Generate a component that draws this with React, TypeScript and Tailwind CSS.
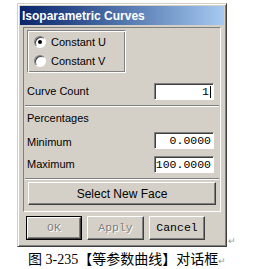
import React from "react";

const ui = { fontFamily: '"Liberation Sans", Arial, sans-serif' };
const mono = { fontFamily: '"Liberation Mono", "Courier New", monospace' };

function Radio({ checked, label }: { checked?: boolean; label: string }) {
  return (
    <div className="flex items-center h-[19px] pl-[6px] gap-[5px]">
      <span className="relative w-[12px] h-[12px] rounded-full bg-white border border-t-[#808080] border-l-[#808080] border-r-white border-b-white shadow-[inset_1px_1px_#404040]">
        {checked && <span className="absolute left-[3px] top-[3px] w-[4px] h-[4px] rounded-full bg-black" />}
      </span>
      <span className="text-[11px] text-black">{label}</span>
    </div>
  );
}

function Field({ value, cursor }: { value: string; cursor?: boolean }) {
  return (
    <div
      className="w-[60px] h-[17px] bg-white border border-t-[#808080] border-l-[#808080] border-r-white border-b-white shadow-[inset_1px_1px_#404040] flex items-center justify-end pr-[2px] text-[11.5px] text-black leading-none overflow-hidden"
      style={mono}
    >
      {value}
      {cursor && <span className="w-px h-[12px] bg-black ml-px" />}
    </div>
  );
}

function Sep() {
  return <div className="h-[2px] border-t border-t-[#808080] border-b border-b-white" />;
}

function Btn({ label, disabled, isDefault, w }: { label: string; disabled?: boolean; isDefault?: boolean; w: string }) {
  return (
    <div className={`${w} h-[24px] ${isDefault ? "border border-black" : ""}`}>
      <div
        className={`h-full flex items-center justify-center border border-t-white border-l-white border-r-[#404040] border-b-[#404040] shadow-[inset_-1px_-1px_#808080] text-[11.5px] ${
          disabled ? "text-[#808080] [text-shadow:1px_1px_#fff]" : "text-black"
        }`}
        style={mono}
      >
        {label}
      </div>
    </div>
  );
}

export default function App() {
  return (
    <div className="w-[266px] h-[269px] bg-white pl-[17px] pt-[3px]">
      <div className="flex items-end">
        <div
          className="w-[210px] h-[244px] bg-[#d4d0c8] border border-t-[#d4d0c8] border-l-[#d4d0c8] border-r-[#404040] border-b-[#404040] shadow-[inset_1px_1px_#fff,inset_-1px_-1px_#808080] p-[2px] flex flex-col"
          style={ui}
        >
          <div className="h-[19px] bg-gradient-to-r from-[#0a246a] to-[#a6caf0] flex items-center pl-[2px] text-white text-[12px] font-bold">
            Isoparametric Curves
          </div>
          <div className="mx-[3px] mt-[2px] h-[185px] border border-t-[#808080] border-l-[#808080] border-r-white border-b-white flex flex-col px-[1px]">
            <div className="ml-[2px] mt-[2px] w-[99px] h-[43px] border border-t-[#808080] border-l-[#808080] border-r-white border-b-white shadow-[inset_1px_1px_#fff,inset_-1px_-1px_#808080] flex flex-col justify-center">
              <Radio checked label="Constant U" />
              <Radio label="Constant V" />
            </div>
            <div className="mt-[10px] h-[17px] flex items-center pl-[2px] pr-[5px] text-[11px] text-black">
              <span>Curve Count</span>
              <div className="ml-auto">
                <Field value="1" cursor />
              </div>
            </div>
            <div className="mt-[5px]">
              <Sep />
            </div>
            <div className="mt-[4px] h-[14px] flex items-center pl-[2px] text-[11px] text-black">Percentages</div>
            <div className="mt-[7px] h-[17px] flex items-center pl-[2px] pr-[5px] text-[11px] text-black">
              <span className="mt-[4px]">Minimum</span>
              <div className="ml-auto">
                <Field value="0.0000" />
              </div>
            </div>
            <div className="mt-[7px] h-[17px] flex items-center pl-[2px] pr-[5px] text-[11px] text-black">
              <span>Maximum</span>
              <div className="ml-auto">
                <Field value="100.0000" />
              </div>
            </div>
            <div className="mt-[5px]">
              <Sep />
            </div>
            <div className="mt-[2px] mx-[3px] h-[23px] flex items-center justify-center border border-t-white border-l-white border-r-[#404040] border-b-[#404040] shadow-[inset_-1px_-1px_#808080] text-[12px] text-black">
              Select New Face
            </div>
          </div>
          <div className="mt-[4px] ml-[6px] flex gap-[5px]">
            <Btn label="OK" disabled isDefault w="w-[56px]" />
            <Btn label="Apply" disabled w="w-[57px]" />
            <Btn label="Cancel" w="w-[56px]" />
          </div>
        </div>
        <span className="ml-px mb-[1px] text-[9px] leading-none text-[#999]" style={ui}>↵</span>
      </div>
      <div
        className="mt-[3px] ml-[11px] text-[14px] leading-[16px] text-black whitespace-nowrap"
        style={{ fontFamily: '"Liberation Serif", "Noto Sans CJK SC", serif' }}
      >
        <span style={{ fontFamily: '"Noto Sans CJK SC", sans-serif' }}>图</span> 3-235
        <span style={{ fontFamily: '"Noto Sans CJK SC", sans-serif' }}>【等参数曲线】对话框</span>
        <span className="text-[9px] text-[#999]">↵</span>
      </div>
    </div>
  );
}
